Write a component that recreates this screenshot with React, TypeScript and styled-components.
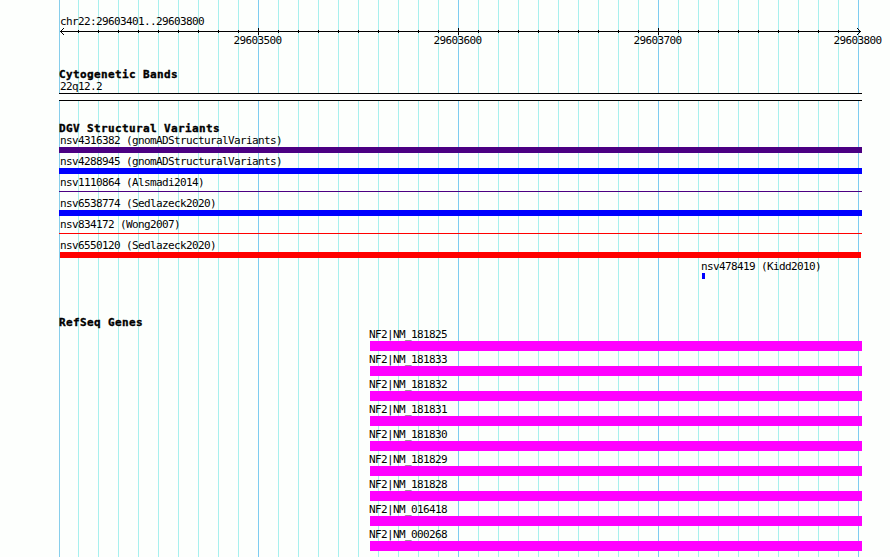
import React from "react";
import styled, { createGlobalStyle } from "styled-components";

const GlobalStyle = createGlobalStyle`
  html, body { margin: 0; padding: 0; background: #fdfffd; }
  body { overflow: hidden; }
`;

const Browser = styled.main`
  box-sizing: border-box;
  width: 890px;
  height: 557px;
  overflow: hidden;
  padding: 15px 0 0 59px;
  color: #000;
  font-family: "DejaVu Sans Mono", monospace;
  font-size: 11px;
  line-height: 13px;
  letter-spacing: -0.622px;
  white-space: pre;
  background:
    linear-gradient(#87ceeb, #87ceeb) 59px 0 / 1px 100% no-repeat,
    repeating-linear-gradient(90deg, #7dcdf0 0 1px, transparent 1px 200px) 258px 0 / 601px 100% no-repeat,
    repeating-linear-gradient(90deg, #a8f0ee 0 1px, transparent 1px 20px) 78px 0 / 780px 100% no-repeat,
    #fdfffd;
`;

const Region = styled.header`
  height: 53px;
`;

const RegionLabel = styled.div`
  height: 12px;
  padding-left: 1px;
`;

const Ruler = styled.svg`
  display: block;
  overflow: visible;
`;

const Track = styled.section<{ $height: number }>`
  width: 803px;
  height: ${(p) => p.$height}px;
`;

const TrackTitle = styled.h2`
  margin: 0;
  height: 12px;
  font-size: 11px;
  font-weight: bold;
  line-height: 13px;
  letter-spacing: 0.378px;
  -webkit-text-stroke: 0.35px #000;
`;

const Feature = styled.div<{ $start: number; $pitch: number }>`
  height: ${(p) => p.$pitch}px;
  padding-left: ${(p) => p.$start}px;
`;

const FeatureLabel = styled.div<{ $indent: number }>`
  height: 13px;
  margin-left: ${(p) => p.$indent}px;
`;

const Bar = styled.div<{ $color: string; $thickness: number; $drop?: number; $length?: number }>`
  height: ${(p) => p.$thickness}px;
  width: ${(p) => (p.$length ? `${p.$length}px` : "100%")};
  margin-top: ${(p) => p.$drop ?? 0}px;
  background: ${(p) => p.$color};
`;

const Chromosome = styled.div`
  box-sizing: border-box;
  height: 8px;
  border: solid #000;
  border-width: 1px 0;
  background: #fdfffd;
`;

type Variant = {
  name: string;
  color: string;
  start?: number;
  indent?: number;
  length?: number;
  thin?: boolean;
};

const variants: Variant[] = [
  { name: "nsv4316382 (gnomADStructuralVariants)", color: "#4b0082" },
  { name: "nsv4288945 (gnomADStructuralVariants)", color: "#0000ff" },
  { name: "nsv1110864 (Alsmadi2014)", color: "#4b0082", thin: true },
  { name: "nsv6538774 (Sedlazeck2020)", color: "#0000ff" },
  { name: "nsv834172 (Wong2007)", color: "#ff0000", thin: true },
  { name: "nsv6550120 (Sedlazeck2020)", color: "#ff0000", start: 1, indent: 0, length: 801 },
  { name: "nsv478419 (Kidd2010)", color: "#0000ff", start: 643, indent: -1, length: 3 },
];

const genes = [
  "NM_181825", "NM_181833", "NM_181832", "NM_181831", "NM_181830",
  "NM_181829", "NM_181828", "NM_016418", "NM_000268",
];

const majors = [29603500, 29603600, 29603700, 29603800];

function Scale() {
  return (
    <Ruler width="803" height="30" viewBox="0 0 803 30" shapeRendering="crispEdges">
      <path d="M1 4h801v1H1z" />
      {Array.from({ length: 39 }, (_, i) => (
        <rect key={i} x={19 + i * 20} y={3} width={1} height={3} />
      ))}
      {majors.map((position, i) => (
        <g key={position}>
          {i < 3 && <rect x={199 + i * 200} y={1} width={1} height={7} />}
          <text x={174.5 + i * 200} y={17}>{position}</text>
        </g>
      ))}
      <path d="M2 3h1v1H2zM3 2h1v1H3zM4 1h1v1H4zM2 5h1v1H2zM3 6h1v1H3zM4 7h1v1H4z" />
      <path d="M800 3h1v1h-1zM799 2h1v1h-1zM798 1h1v1h-1zM800 5h1v1h-1zM799 6h1v1h-1zM798 7h1v1h-1z" />
    </Ruler>
  );
}

export default function App() {
  return (
    <>
      <GlobalStyle />
      <Browser>
        <Region>
          <RegionLabel>chr22:29603401..29603800</RegionLabel>
          <Scale />
        </Region>
        <Track $height={54}>
          <TrackTitle>Cytogenetic Bands</TrackTitle>
          <FeatureLabel $indent={1}>22q12.2</FeatureLabel>
          <Chromosome />
        </Track>
        <Track $height={194}>
          <TrackTitle>DGV Structural Variants</TrackTitle>
          {variants.map((v) => (
            <Feature key={v.name} $start={v.start ?? 0} $pitch={21}>
              <FeatureLabel $indent={v.indent ?? 1}>{v.name}</FeatureLabel>
              <Bar $color={v.color} $thickness={v.thin ? 1 : 6} $drop={v.thin ? 2 : 0} $length={v.length} />
            </Feature>
          ))}
        </Track>
        <Track $height={241}>
          <TrackTitle>RefSeq Genes</TrackTitle>
          {genes.map((id) => (
            <Feature key={id} $start={311} $pitch={25}>
              <FeatureLabel $indent={-1}>NF2|{id}</FeatureLabel>
              <Bar $color="#ff00ff" $thickness={10} />
            </Feature>
          ))}
        </Track>
      </Browser>
    </>
  );
}
